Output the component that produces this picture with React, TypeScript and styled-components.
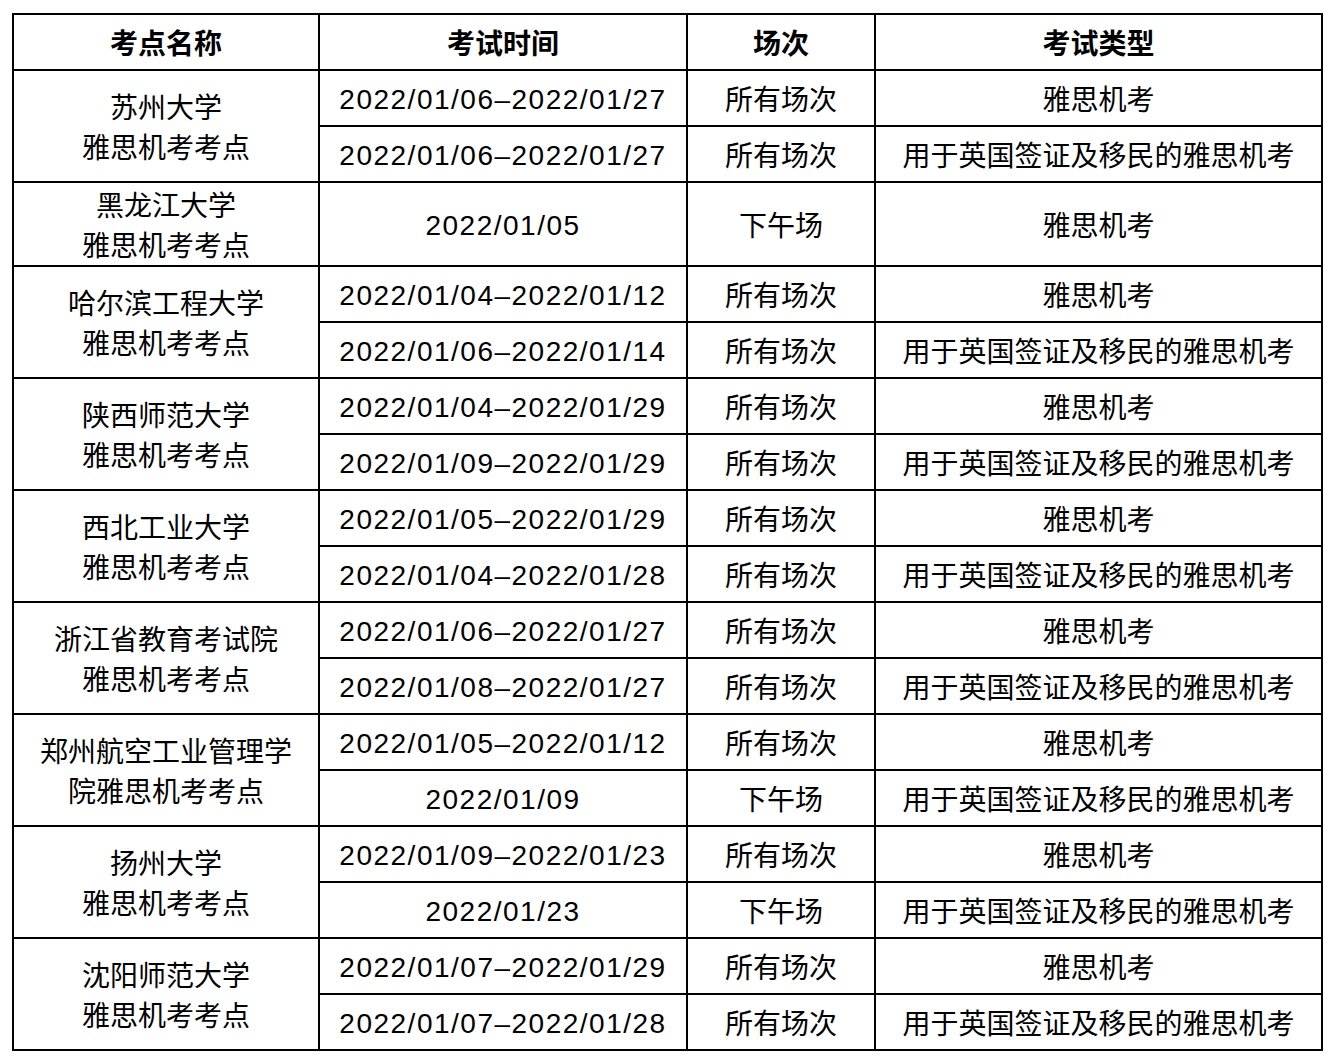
import styled, { createGlobalStyle } from "styled-components";

const GlobalStyle = createGlobalStyle`
  html, body {
    margin: 0;
    padding: 0;
    background: #fff;
  }
`;

const Page = styled.div`
  padding: 13px 0 0 12px;
  font-family: "Noto Sans CJK SC", "Noto Sans", sans-serif;
  color: #000;
`;

const Table = styled.table`
  border-collapse: collapse;
  table-layout: fixed;
  width: 1309px;
  border: 2px solid #000;
`;

const Col = styled.col<{ $w: number }>`
  width: ${(p) => p.$w}px;
`;

const Head = styled.th`
  height: 54px;
  padding: 0;
  border: 2px solid #000;
  font-size: 28px;
  font-weight: 700;
  line-height: 40px;
  text-align: center;
  vertical-align: middle;
`;

const Cell = styled.td<{ $tall?: boolean }>`
  height: ${(p) => (p.$tall ? 82 : 54)}px;
  padding: 0;
  border: 2px solid #000;
  font-size: 28px;
  font-weight: 400;
  line-height: 40px;
  text-align: center;
  vertical-align: middle;
  white-space: nowrap;
`;

const DateCell = styled(Cell)`
  height: ${(p) => (p.$tall ? 79 : 51)}px;
  padding-top: 3px;
  font-family: "Liberation Sans", Arial, sans-serif;
  letter-spacing: 1.5px;
`;

type Row = { time: string; session: string; kind: string };
type Site = { name: [string, string]; rows: Row[] };

const ALL = "所有场次";
const PM = "下午场";
const CBT = "雅思机考";
const UKVI = "用于英国签证及移民的雅思机考";

const sites: Site[] = [
  {
    name: ["苏州大学", "雅思机考考点"],
    rows: [
      { time: "2022/01/06–2022/01/27", session: ALL, kind: CBT },
      { time: "2022/01/06–2022/01/27", session: ALL, kind: UKVI },
    ],
  },
  {
    name: ["黑龙江大学", "雅思机考考点"],
    rows: [{ time: "2022/01/05", session: PM, kind: CBT }],
  },
  {
    name: ["哈尔滨工程大学", "雅思机考考点"],
    rows: [
      { time: "2022/01/04–2022/01/12", session: ALL, kind: CBT },
      { time: "2022/01/06–2022/01/14", session: ALL, kind: UKVI },
    ],
  },
  {
    name: ["陕西师范大学", "雅思机考考点"],
    rows: [
      { time: "2022/01/04–2022/01/29", session: ALL, kind: CBT },
      { time: "2022/01/09–2022/01/29", session: ALL, kind: UKVI },
    ],
  },
  {
    name: ["西北工业大学", "雅思机考考点"],
    rows: [
      { time: "2022/01/05–2022/01/29", session: ALL, kind: CBT },
      { time: "2022/01/04–2022/01/28", session: ALL, kind: UKVI },
    ],
  },
  {
    name: ["浙江省教育考试院", "雅思机考考点"],
    rows: [
      { time: "2022/01/06–2022/01/27", session: ALL, kind: CBT },
      { time: "2022/01/08–2022/01/27", session: ALL, kind: UKVI },
    ],
  },
  {
    name: ["郑州航空工业管理学", "院雅思机考考点"],
    rows: [
      { time: "2022/01/05–2022/01/12", session: ALL, kind: CBT },
      { time: "2022/01/09", session: PM, kind: UKVI },
    ],
  },
  {
    name: ["扬州大学", "雅思机考考点"],
    rows: [
      { time: "2022/01/09–2022/01/23", session: ALL, kind: CBT },
      { time: "2022/01/23", session: PM, kind: UKVI },
    ],
  },
  {
    name: ["沈阳师范大学", "雅思机考考点"],
    rows: [
      { time: "2022/01/07–2022/01/29", session: ALL, kind: CBT },
      { time: "2022/01/07–2022/01/28", session: ALL, kind: UKVI },
    ],
  },
];

const App = () => {
  return (
    <Page>
      <GlobalStyle />
      <Table>
        <colgroup>
          <Col $w={306} />
          <Col $w={368} />
          <Col $w={188} />
          <Col $w={447} />
        </colgroup>
        <thead>
          <tr>
            <Head>考点名称</Head>
            <Head>考试时间</Head>
            <Head>场次</Head>
            <Head>考试类型</Head>
          </tr>
        </thead>
        <tbody>
          {sites.map((site) =>
            site.rows.map((row, i) => {
              const tall = site.rows.length === 1;
              return (
                <tr key={site.name[0] + i}>
                  {i === 0 && (
                    <Cell rowSpan={site.rows.length} $tall={tall}>
                      {site.name[0]}
                      <br />
                      {site.name[1]}
                    </Cell>
                  )}
                  <DateCell $tall={tall}>{row.time}</DateCell>
                  <Cell $tall={tall}>{row.session}</Cell>
                  <Cell $tall={tall}>{row.kind}</Cell>
                </tr>
              );
            })
          )}
        </tbody>
      </Table>
    </Page>
  );
};

export default App;
